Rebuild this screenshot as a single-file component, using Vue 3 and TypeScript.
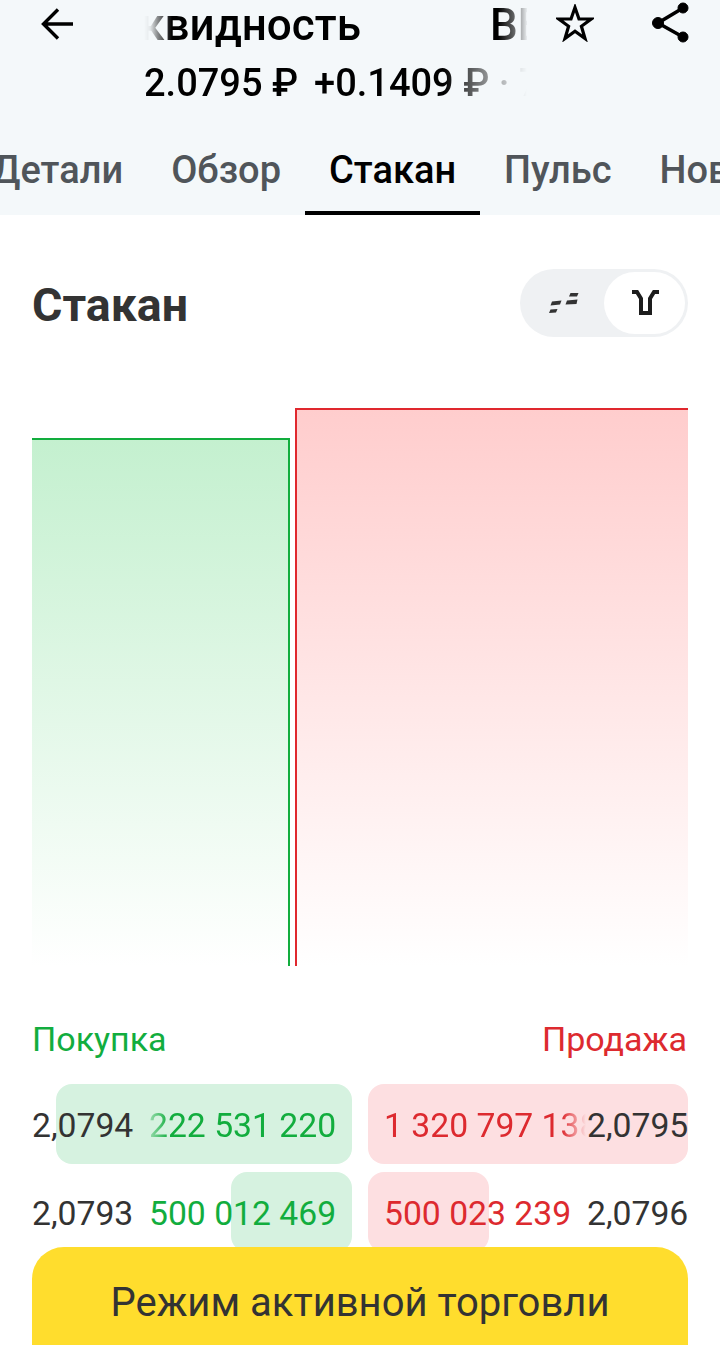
<script setup lang="ts">
const tabs = ['Детали', 'Обзор', 'Стакан', 'Пульс', 'Новости']
const active = 'Стакан'
const rows = [
  { buyPrice: '2,0794', buyQty: '222 531 220', buyBar: 296, sellPrice: '2,0795', sellQty: '1 320 797 138', sellBar: 320, fade: true },
  { buyPrice: '2,0793', buyQty: '500 012 469', buyBar: 121, sellPrice: '2,0796', sellQty: '500 023 239', sellBar: 121, fade: false },
]
</script>

<template>
  <div class="page">
    <header class="head">
      <div class="top">
        <button class="icon back" aria-label="Назад">
          <svg width="36" height="36" viewBox="0 0 36 36" fill="none" stroke="#000" stroke-width="3.4">
            <path d="M34 18H5M19 3.5 4.5 18 19 32.5" />
          </svg>
        </button>
        <div class="marquee">
          <div class="title"><span class="t1">Ликвидность</span><span class="t2">ВБ</span></div>
          <div class="quote"><span>2.0795 ₽</span><span class="chg">+0.1409 ₽ · 7,27 %</span></div>
        </div>
        <button class="icon star" aria-label="Избранное">
          <svg width="38" height="38" viewBox="0 0 38 38" fill="none" stroke="#000" stroke-width="3.2" stroke-linejoin="miter">
            <path d="M19 3.5 23 15H35.2L25.4 22.3 29 34.5 19 27.2 9 34.5 12.6 22.3 2.8 15H15Z" />
          </svg>
        </button>
        <button class="icon share" aria-label="Поделиться">
          <svg width="40" height="44" viewBox="0 0 40 44" fill="#000" stroke="#000">
            <circle cx="32" cy="8" r="5" />
            <circle cx="7" cy="23" r="5.500" />
            <circle cx="32" cy="37" r="5" />
            <path d="M32 8 7 23 32 37" fill="none" stroke-width="3.600" />
          </svg>
        </button>
      </div>
      <nav class="tabs">
        <a v-for="t in tabs" :key="t" class="tab" :class="{ on: t === active }">{{ t }}</a>
      </nav>
    </header>

    <main class="body">
      <div class="hrow">
        <h2>Стакан</h2>
        <div class="toggle">
          <span class="opt">
            <svg width="30" height="22" viewBox="0 0 30 22" fill="#333">
              <path d="M21.500 1H29.500L28 4.500H20ZM18 8.500 28.500 7.500 27.500 12 16.500 12.500ZM3 9.500 12.500 8.500 11 12.500 1.500 13.500ZM1.500 17.500 8.500 17 7 20.500 0 21Z" />
            </svg>
          </span>
          <span class="opt sel">
            <svg width="30" height="28" viewBox="0 0 30 28" fill="none" stroke="#1d1d1d" stroke-width="4">
              <path d="M2 3H7L11 9.500V24H20V9.500L24 3H29" />
            </svg>
          </span>
        </div>
      </div>

      <svg class="chart" width="656" height="566" viewBox="0 0 656 566">
        <defs>
          <linearGradient id="gb" x1="0" y1="0" x2="0" y2="1">
            <stop offset="0" stop-color="#c4f0cf" />
            <stop offset="1" stop-color="#ffffff" />
          </linearGradient>
          <linearGradient id="gs" x1="0" y1="0" x2="0" y2="1">
            <stop offset="0" stop-color="#ffcdcd" />
            <stop offset="1" stop-color="#ffffff" />
          </linearGradient>
        </defs>
        <path d="M0 39H257V566H0Z" fill="url(#gb)" />
        <path d="M264 9H656V566H264Z" fill="url(#gs)" />
        <path d="M0 39H257V566" fill="none" stroke="#12ad3e" stroke-width="2" />
        <path d="M656 9H264V566" fill="none" stroke="#e0282e" stroke-width="2" />
      </svg>

      <div class="labels">
        <span class="buy">Покупка</span>
        <span class="sell">Продажа</span>
      </div>

      <div class="book">
        <div v-for="r in rows" :key="r.buyPrice" class="row">
          <div class="side left">
            <i class="bar barb" :style="{ width: r.buyBar + 'px' }"></i>
            <span class="price">{{ r.buyPrice }}</span>
            <span class="qty qb" :class="{ fade: r.fade }">{{ r.buyQty }}</span>
          </div>
          <div class="side right">
            <i class="bar bars" :style="{ width: r.sellBar + 'px' }"></i>
            <span class="qty qs" :class="{ fade: r.fade }">{{ r.sellQty }}</span>
            <span class="price">{{ r.sellPrice }}</span>
          </div>
        </div>
      </div>
    </main>

    <button class="cta">Режим активной торговли</button>
  </div>
</template>

<style>
html, body { margin: 0; background: #fff; }
</style>

<style scoped>
.page {
  position: relative;
  width: 720px;
  height: 1345px;
  overflow: hidden;
  background: #fff;
  font-family: Roboto, "Noto Sans", sans-serif;
}
button { border: 0; background: none; padding: 0; font: inherit; }
.head { height: 215px; background: #f4f8fa; display: flex; flex-direction: column; }
.top { height: 128px; display: flex; align-items: flex-start; }
.icon { display: flex; flex: none; }
.back { margin: 6px 0 0 39px; }
.star { margin: 4px 0 0 29px; }
.share { margin: 0 0 0 57px; }
.marquee {
  width: 383px;
  margin-left: 69px;
  flex: none;
  overflow: hidden;
  height: 96px;
  color: #000;
}
.title {
  display: flex;
  white-space: nowrap;
  font-size: 44px;
  font-weight: 500;
  line-height: 50px;
  -webkit-mask-image: linear-gradient(90deg, transparent 0, rgba(0, 0, 0, 0.06) 6px, rgba(0, 0, 0, 0.45) 14px, #000 28px, #000 354px, rgba(0, 0, 0, 0.6) 370px, transparent 384px);
  mask-image: linear-gradient(90deg, transparent 0, rgba(0, 0, 0, 0.06) 6px, rgba(0, 0, 0, 0.45) 14px, #000 28px, #000 354px, rgba(0, 0, 0, 0.6) 370px, transparent 384px);
}
.t1 { margin-left: -60px; }
.t2 { margin-left: 129px; }
.quote {
  display: flex;
  white-space: nowrap;
  font-size: 38px;
  font-weight: 500;
  line-height: 46px;
  height: 46px;
  overflow: hidden;
  margin-top: 10px;
  -webkit-mask-image: linear-gradient(90deg, #000 300px, rgba(0, 0, 0, 0.45) 340px, transparent 383px);
  mask-image: linear-gradient(90deg, #000 300px, rgba(0, 0, 0, 0.45) 340px, transparent 383px);
}
.chg { margin-left: 16px; }
.tabs { display: flex; margin-left: -32px; white-space: nowrap; height: 87px; }
.tab {
  padding: 0 24px;
  font-size: 38px;
  font-weight: 500;
  color: #50555a;
  line-height: 84px;
  height: 83px;
  flex: none;
}
.tab.on { color: #000; border-bottom: 4px solid #000; }
.body { padding: 0 32px; }
.hrow { display: flex; justify-content: space-between; align-items: center; margin-top: 54px; height: 68px; }
h2 { margin: 0; padding-top: 4px; font-size: 46.5px; font-weight: 700; color: #333; line-height: 68px; }
.toggle {
  width: 168px;
  height: 68px;
  box-sizing: border-box;
  border-radius: 34px;
  background: #eff1f3;
  display: flex;
  align-items: center;
  justify-content: flex-end;
  padding-right: 3px;
}
.opt { width: 81px; height: 62px; display: flex; align-items: center; justify-content: center; border-radius: 31px; }
.sel { background: #fff; }
.chart { display: block; margin-top: 63px; }
.labels { display: flex; justify-content: space-between; margin-top: 53px; font-size: 34px; line-height: 40px; padding: 0 1px 0 0; }
.buy { color: #12ad3e; }
.sell { color: #dd2a2f; }
.book { margin-top: 25px; display: flex; flex-direction: column; gap: 8px; }
.row { display: flex; gap: 16px; }
.side { position: relative; width: 320px; height: 80px; display: flex; align-items: center; font-size: 33.700px; }
.left { box-sizing: border-box; justify-content: space-between; }
.right { box-sizing: border-box; justify-content: space-between; }
.bar { position: absolute; top: 0; bottom: 0; border-radius: 16px; }
.barb { right: 0; background: #d6f2e0; }
.bars { left: 0; background: #fddfe1; }
.price { position: relative; color: #333; flex: none; padding-top: 3px; }
.left .price { width: 117px; }
.right .price { width: 101px; text-align: left; }
.qty { position: relative; white-space: nowrap; overflow: hidden; padding-top: 3px; }
.qb { color: #12ad3e; width: 186px; margin-right: 17px; text-align: right; }
.qb.fade { -webkit-mask-image: linear-gradient(90deg, rgba(0, 0, 0, 0.3) 0, #000 20px); mask-image: linear-gradient(90deg, rgba(0, 0, 0, 0.3) 0, #000 20px); }
.qs { color: #dd2a2f; width: 202px; margin-left: 16px; }
.qs.fade { -webkit-mask-image: linear-gradient(90deg, #000 calc(100% - 24px), transparent 100%); mask-image: linear-gradient(90deg, #000 calc(100% - 24px), transparent 100%); }
.cta {
  position: absolute;
  left: 32px;
  top: 1247px;
  width: 656px;
  height: 130px;
  border-radius: 32px;
  background: #ffdd2d;
  color: #333;
  font-size: 40px;
  line-height: 112px;
  text-align: center;
  display: block;
  padding-bottom: 18px;
}
</style>
